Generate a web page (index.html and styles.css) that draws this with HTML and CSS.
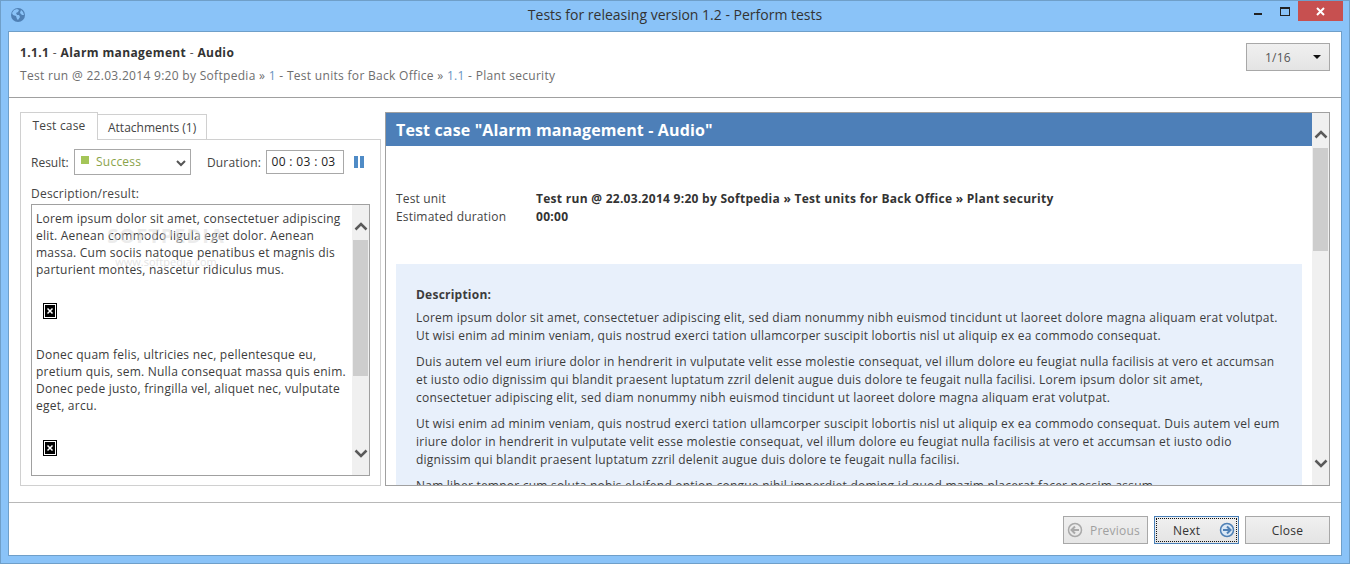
FILE: index.html
```html
<!DOCTYPE html>
<html lang="en">
<head>
<meta charset="utf-8">
<title>Tests for releasing version 1.2 - Perform tests</title>
<link rel="stylesheet" href="styles.css">
</head>
<body>
<div class="window">
  <div class="titlebar">
    <svg class="app-icon" width="16" height="16" viewBox="0 0 16 16"><circle cx="8" cy="8" r="7" fill="#4f80b5"/><path d="M4 3l3-1 2 1-1 2-2 1 1 2 2 0 1 2-2 3-1-1-1-3-3-1-1-2z" fill="#8ac3f8"/><path d="M11 3l2 2 1 3-2 0-2-2z" fill="#8ac3f8"/></svg>
    <div class="title">Tests for releasing version 1.2 - Perform tests</div>
    <div class="controls">
      <div class="ctl"><span class="min"></span></div>
      <div class="ctl"><span class="max"></span></div>
      <div class="close"><svg width="9" height="9" viewBox="0 0 9 9"><path d="M1 1l7 7M8 1L1 8" stroke="#fff" stroke-width="2"/></svg></div>
    </div>
  </div>
  <div class="client">
    <header class="head">
      <div class="crumbs">
        <div class="crumb-title"><b>1.1.1</b> - <b>Alarm management</b> - <b>Audio</b></div>
        <div class="crumb-path">Test run @ 22.03.2014 9:20 by Softpedia » <a>1</a> - Test units for Back Office » <a>1.1</a> - Plant security</div>
      </div>
      <div class="pager"><span class="pager-text">1/16</span><span class="caret"></span></div>
    </header>
    <main class="body">
      <section class="left">
        <div class="tabs">
          <div class="tab active">Test case</div>
          <div class="tab">Attachments (1)</div>
        </div>
        <div class="tabpage">
          <div class="formrow">
            <span class="res-label">Result:</span>
            <div class="select"><span class="swatch"></span><span class="sel-text">Success</span>
              <svg class="chev" width="10" height="7" viewBox="0 0 10 7"><path d="M1 1l4 4 4-4" fill="none" stroke="#555" stroke-width="2"/></svg>
            </div>
            <span class="dur-label">Duration:</span>
            <div class="time">00 : 03 : 03</div>
            <div class="pause"><span></span><span></span></div>
          </div>
          <div class="desc-label">Description/result:</div>
          <div class="editor">
            <div class="editor-text">
              <p>Lorem ipsum dolor sit amet, consectetuer adipiscing<br>elit. Aenean commodo ligula eget dolor. Aenean<br>massa. Cum sociis natoque penatibus et magnis dis<br>parturient montes, nascetur ridiculus mus.</p>
              <div class="broken"><svg width="14" height="16" viewBox="0 0 14 16"><rect x=".5" y=".5" width="13" height="15" fill="#fff" stroke="#000"/><rect x="2" y="2" width="10" height="12" fill="#000"/><path d="M4.5 5.500l5 5M9.500 5.500l-5 5" stroke="#fff" stroke-width="1.500"/></svg></div>
              <p class="second">Donec quam felis, ultricies nec, pellentesque eu,<br>pretium quis, sem. Nulla consequat massa quis enim.<br>Donec pede justo, fringilla vel, aliquet nec, vulputate<br>eget, arcu.</p>
              <div class="broken last"><svg width="14" height="16" viewBox="0 0 14 16"><rect x=".5" y=".5" width="13" height="15" fill="#fff" stroke="#000"/><rect x="2" y="2" width="10" height="12" fill="#000"/><path d="M4.5 5.500l5 5M9.500 5.500l-5 5" stroke="#fff" stroke-width="1.500"/></svg></div>
            </div>
            <div class="scroll small">
              <svg class="arrow up" width="14" height="9" viewBox="0 0 14 9"><path d="M1.500 7.500L7 2l5.500 5.500" fill="none" stroke="#5a5a5a" stroke-width="2.500"/></svg>
              <div class="track"><div class="thumb t1"></div></div>
              <svg class="arrow down" width="14" height="9" viewBox="0 0 14 9"><path d="M1.500 1.500L7 7l5.500-5.500" fill="none" stroke="#5a5a5a" stroke-width="2.500"/></svg>
            </div>
            <div class="mark"><div class="mark-big">SOFTPEDIA</div><div class="mark-small">www.softpedia.com</div></div>
          </div>
        </div>
      </section>
      <section class="right">
        <div class="view">
          <h1 class="case-title">Test case "Alarm management - Audio"</h1>
          <div class="view-body">
            <div class="meta">
              <div class="k">Test unit</div><div class="v">Test run @ 22.03.2014 9:20 by Softpedia » Test units for Back Office » Plant security</div>
              <div class="k">Estimated duration</div><div class="v">00:00</div>
            </div>
            <div class="box">
              <div class="box-h">Description:</div>
              <p>Lorem ipsum dolor sit amet, consectetuer adipiscing elit, sed diam nonummy nibh euismod tincidunt ut laoreet dolore magna aliquam erat volutpat.<br>Ut wisi enim ad minim veniam, quis nostrud exerci tation ullamcorper suscipit lobortis nisl ut aliquip ex ea commodo consequat.</p>
              <p>Duis autem vel eum iriure dolor in hendrerit in vulputate velit esse molestie consequat, vel illum dolore eu feugiat nulla facilisis at vero et accumsan<br>et iusto odio dignissim qui blandit praesent luptatum zzril delenit augue duis dolore te feugait nulla facilisi. Lorem ipsum dolor sit amet,<br>consectetuer adipiscing elit, sed diam nonummy nibh euismod tincidunt ut laoreet dolore magna aliquam erat volutpat.</p>
              <p>Ut wisi enim ad minim veniam, quis nostrud exerci tation ullamcorper suscipit lobortis nisl ut aliquip ex ea commodo consequat. Duis autem vel eum<br>iriure dolor in hendrerit in vulputate velit esse molestie consequat, vel illum dolore eu feugiat nulla facilisis at vero et accumsan et iusto odio<br>dignissim qui blandit praesent luptatum zzril delenit augue duis dolore te feugait nulla facilisi.</p>
              <p>Nam liber tempor cum soluta nobis eleifend option congue nihil imperdiet doming id quod mazim placerat facer possim assum.</p>
            </div>
          </div>
          <div class="scroll big">
            <svg class="arrow up" width="14" height="9" viewBox="0 0 14 9"><path d="M1.500 7.500L7 2l5.500 5.500" fill="none" stroke="#5a5a5a" stroke-width="2.500"/></svg>
            <div class="track"><div class="thumb t2"></div></div>
            <svg class="arrow down" width="14" height="9" viewBox="0 0 14 9"><path d="M1.500 1.500L7 7l5.500-5.500" fill="none" stroke="#5a5a5a" stroke-width="2.500"/></svg>
          </div>
        </div>
      </section>
    </main>
    <footer class="foot">
      <div class="btn disabled">
        <svg width="16" height="16" viewBox="0 0 16 16"><circle cx="8" cy="8" r="6.500" fill="none" stroke="#a9a9a9" stroke-width="1.500"/><path d="M12 8H5M8 4.500L4.500 8 8 11.500" fill="none" stroke="#a9a9a9" stroke-width="2"/></svg>
        <span class="btn-l">Previous</span>
      </div>
      <div class="btn primary">
        <div class="focus"><span class="next-l">Next</span>
        <svg width="16" height="16" viewBox="0 0 16 16"><circle cx="8" cy="8" r="6.500" fill="#dbe8f5" stroke="#4f80b5" stroke-width="1.500"/><path d="M4 8h7M8 4.500L11.500 8 8 11.500" fill="none" stroke="#4f80b5" stroke-width="2"/></svg></div>
      </div>
      <div class="btn plain">Close</div>
    </footer>
  </div>
</div>
</body>
</html>
```
FILE: styles.css
```css
* { box-sizing: border-box; }
html, body { margin: 0; padding: 0; }
body { width: 1350px; height: 564px; overflow: hidden; font-family: "Open Sans", "Noto Sans", sans-serif; font-size: 12px; letter-spacing: 0.23px; color: #3a3a3a; }
p { margin: 0; }
.window { width: 1350px; height: 564px; background: #8ac3f8; border: 1px solid #6f9fc9; padding: 0 7px 7px; display: flex; flex-direction: column; }
.titlebar { height: 30px; flex: none; display: flex; align-items: flex-start; position: relative; }
.app-icon { margin: 6px 0 0 2px; flex: none; }
.title { position: absolute; left: 0; right: 0; top: 4px; text-align: center; font-size: 14px; line-height: 20px; color: #333; letter-spacing: 0; }
.controls { margin-left: auto; display: flex; position: relative; }
.ctl { width: 27px; height: 20px; position: relative; }
.min { position: absolute; left: 10px; top: 12px; width: 8px; height: 2px; background: #222; }
.max { position: absolute; left: 9px; top: 6px; width: 10px; height: 9px; border: 1px solid #222; border-top-width: 2px; }
.close { width: 45px; height: 20px; background: #c75050; display: flex; align-items: center; justify-content: center; margin-right: -1px; }
.client { flex: 1; min-height: 0; background: #fff; border: 1px solid #6f9fc9; display: flex; flex-direction: column; }
.head { height: 66px; flex: none; border-bottom: 1px solid #a0a0a0; display: flex; justify-content: space-between; padding: 11px 11px 0 11px; }
.crumb-title { line-height: 20px; color: #555; letter-spacing: 0.38px; }
.crumb-title b { color: #333; font-weight: 700; }
.crumb-path { line-height: 20px; margin-top: 3px; color: #6e6e6e; letter-spacing: 0.3px; }
.crumb-path a { color: #6a93bf; }
.pager { width: 84px; height: 28px; border: 1px solid #a8a8a8; background: linear-gradient(#f0f0f0, #e4e4e4); display: flex; align-items: center; padding: 0 8px 0 18px; justify-content: space-between; color: #555; }
.caret { width: 0; height: 0; border: 4px solid transparent; border-top: 4px solid #111; border-bottom: 0; }
.body { flex: 1; min-height: 0; display: flex; padding: 14px 11px 16px 11px; gap: 4px; }
.left { width: 361px; flex: none; display: flex; flex-direction: column; }
.tabs { display: flex; height: 28px; flex: none; position: relative; z-index: 1; margin-bottom: -1px; align-items: flex-end; }
.tab { height: 26px; padding: 0 10px; border: 1px solid #d0d0d0; border-left: 0; line-height: 25px; color: #444; letter-spacing: 0; }
.tab.active { height: 28px; width: 78px; border-left: 1px solid #d0d0d0; border-bottom: 0; background: #fff; text-align: center; padding: 0; letter-spacing: 0.2px; }
.tabpage { flex: 1; min-height: 0; border: 1px solid #d0d0d0; padding: 9px 10px 9px; display: flex; flex-direction: column; }
.formrow { display: flex; align-items: center; height: 26px; color: #444; }
.res-label { width: 38px; flex: none; white-space: nowrap; letter-spacing: 0; }
.select { width: 117px; height: 26px; flex: none; margin-left: 5px; border: 1px solid #a8a8a8; display: flex; align-items: center; padding: 0 4px 0 6px; }
.swatch { width: 8px; height: 8px; background: #a4c558; margin-top: -4px; }
.sel-text { margin-left: 7px; color: #8aa34a; margin-top: -1px; }
.chev { margin-left: auto; margin-top: 2px; }
.dur-label { margin-left: 16px; width: 54px; flex: none; white-space: nowrap; letter-spacing: 0.15px; }
.time { width: 78px; height: 24px; flex: none; margin-left: 5px; border: 1px solid #a8a8a8; line-height: 22px; text-align: center; color: #222; white-space: nowrap; letter-spacing: 0.35px; padding-right: 3px; }
.pause { display: flex; gap: 2px; margin-left: 10px; }
.pause span { width: 4px; height: 12px; background: #4f8bc6; }
.desc-label { line-height: 16px; margin-top: 11px; color: #444; }
.editor { flex: 1; min-height: 0; margin-top: 2px; border: 1px solid #a0a0a0; display: flex; overflow: hidden; position: relative; }
.editor-text { flex: 1; min-width: 0; padding: 5px 0 0 4px; line-height: 17px; color: #3c3c3c; white-space: nowrap; overflow: hidden; }
.broken { height: 16px; margin: 25px 0 0 7px; line-height: 0; }
.second { margin-top: 27px; }
.broken.last { margin-top: 26px; }
.mark { position: absolute; left: 72px; top: 20px; width: 124px; text-align: center; color: rgba(220, 220, 220, 0.55); pointer-events: none; white-space: nowrap; }
.mark-big { font-size: 20px; font-weight: 700; line-height: 22px; letter-spacing: 1px; }
.mark-small { font-size: 11px; line-height: 14px; margin-top: 8px; letter-spacing: 0; color: rgba(200, 200, 200, 0.5); }
.scroll { width: 17px; flex: none; background: #f0f0f0; display: flex; flex-direction: column; align-items: center; }
.scroll .arrow { flex: none; }
.scroll .up { margin: 17px 0 9px; }
.scroll .down { margin: 9px 0 17px; }
.scroll .track { flex: 1; width: 15px; min-height: 0; }
.thumb { width: 15px; background: #cdcdcd; }
.t1 { height: 136px; }
.t2 { height: 103px; }
.right { flex: 1; min-width: 0; }
.view { height: 100%; border: 1px solid #a0a0a0; overflow: hidden; display: grid; grid-template-columns: 1fr 17px; grid-template-rows: 33px 1fr; }
.case-title { grid-column: 1; grid-row: 1; margin: 0; height: 33px; background: #4d7fb8; color: #fff; font-size: 16px; font-weight: 700; line-height: 35px; padding-left: 10px; white-space: nowrap; letter-spacing: 0.14px; }
.view-body { grid-column: 1; grid-row: 2; min-height: 0; overflow: hidden; padding: 44px 10px 0; }
.view .scroll { grid-column: 2; grid-row: 1 / 3; }
.meta { display: grid; grid-template-columns: 140px 1fr; line-height: 18px; white-space: nowrap; color: #444; }
.k { letter-spacing: 0.17px; }
.v { font-weight: 700; color: #333; letter-spacing: 0.28px; }
.box { margin-top: 38px; background: #e8f0fb; padding: 22px 20px 10px 20px; line-height: 18px; white-space: nowrap; color: #3c3c3c; }
.box-h { font-weight: 700; line-height: 18px; margin-bottom: 5px; }
.box p { margin-bottom: 8px; }
.foot { height: 53px; flex: none; border-top: 1px solid #b8b8b8; display: flex; justify-content: flex-end; gap: 6px; padding: 13px 11px 0 0; }
.btn { height: 28px; width: 85px; border: 1px solid #a8a8a8; background: linear-gradient(#f0f0f0, #e4e4e4); display: flex; align-items: center; color: #333; }
.btn.disabled { padding-left: 3px; color: #a0a0a0; background: linear-gradient(#efefef, #e6e6e6); }
.btn-l { margin-left: 7px; }
.btn.primary { border-color: #4a80b8; padding: 1px; }
.focus { width: 100%; height: 100%; border: 1px dotted #111; display: flex; align-items: center; justify-content: space-between; padding: 0 1px 0 16px; }
.btn.plain { justify-content: center; }
```
